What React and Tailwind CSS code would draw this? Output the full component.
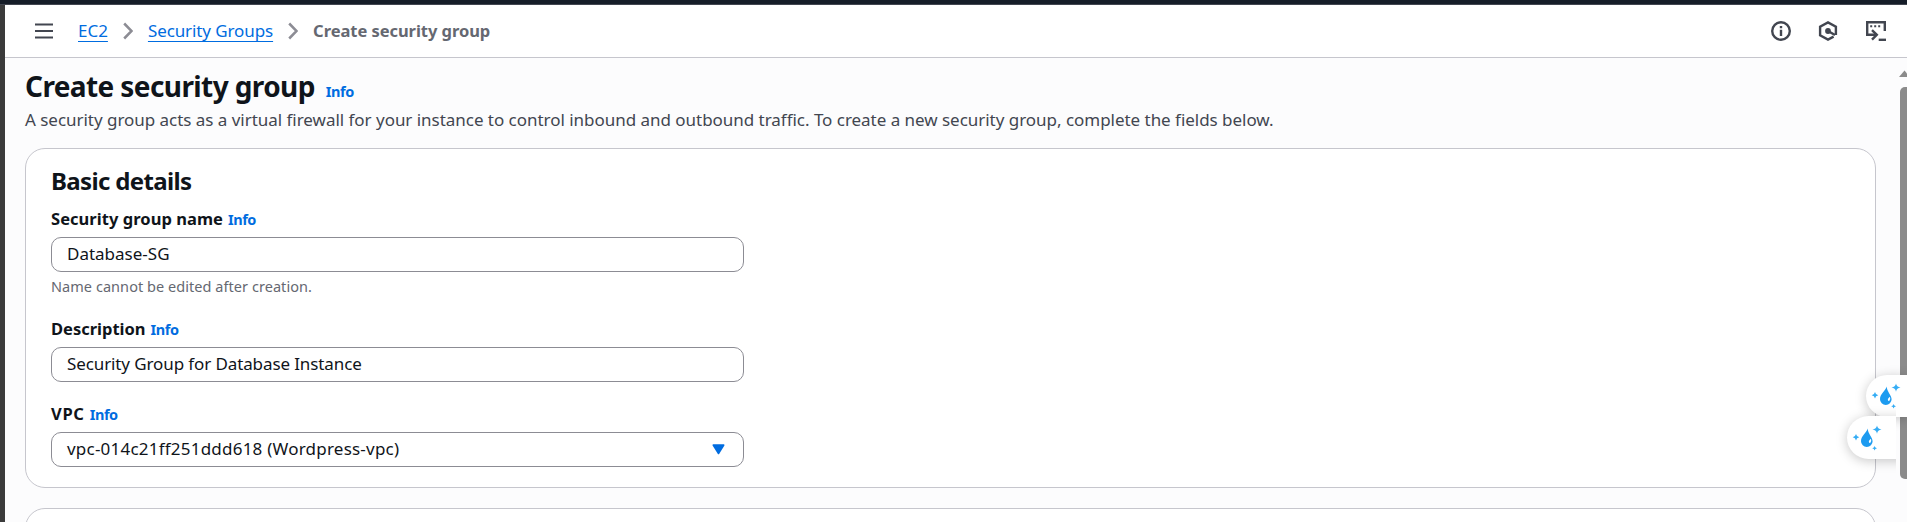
function Chevron() {
  return (
    <svg width="10" height="18" viewBox="0 0 10 18" fill="none" stroke="#8c8c94" strokeWidth="2.5" className="shrink-0">
      <path d="M1.2 1.5 L8.6 9 L1.2 16.5" />
    </svg>
  );
}

function HeaderIcons() {
  return (
    <div className="ml-auto mr-[21px] flex items-center gap-7">
      <svg width="20" height="20" viewBox="0 0 20 20" fill="none" stroke="#424650" strokeWidth="2.4" className="-mr-px">
        <circle cx="10" cy="10" r="8.8" />
        <path d="M10 8.7V15M10 5V7.3" />
      </svg>
      <svg width="20" height="20" viewBox="0 0 20 20" fill="none" stroke="#424650" strokeWidth="2.4">
        <path d="M17.9 14V5.6L10 1.4 2.1 5.6v8.8L10 18.6l5.6-3" />
        <circle cx="10" cy="10" r="2.9" fill="#424650" stroke="none" />
        <path d="M10 10l7 4" />
      </svg>
      <svg width="20" height="20" viewBox="0 0 20 20" fill="none" stroke="#424650" strokeWidth="2.4">
        <path d="M18.8 10V1.2H1.2v12.6H11" />
        <path d="M6 9.2l4.8 4.6L6 18.6" />
        <path d="M12.7 18.8H20" />
        <path d="M4.2 5.2h2M8.2 5.2h2M12.2 5.2h2" strokeWidth="2" />
      </svg>
    </div>
  );
}

function Info({ className = "" }) {
  return <a className={`text-[14.5px] font-bold tracking-[-0.42px] text-[#006ce0] ${className}`}>Info</a>;
}

function Field({ label, labelClass = "", valueClass = "", value, select, className = "" }) {
  return (
    <div className={className}>
      <div className="h-[22px] text-[16.5px] leading-[22px] text-[#0f141a]">
        <span className={`font-bold ${labelClass}`}>{label}</span>
        <Info className="ml-[5px]" />
      </div>
      <div className="mt-[7px] flex h-[35px] w-[693px] items-center justify-between rounded-[10px] border border-[#8c8c94] bg-white pl-[15px] pr-[18px] text-[17px] leading-[22px] text-[#0f141a]">
        <span className={`-mt-px ${valueClass}`}>{value}</span>
        {select && (
          <svg width="13" height="11" viewBox="0 0 13 11" fill="#006ce0" className="-mt-px">
            <path d="M1.2 0.3H11.8Q13 0.6 12.3 1.8L7.3 9.7Q6.5 10.7 5.7 9.7L0.7 1.8Q0 0.6 1.2 0.3Z" />
          </svg>
        )}
      </div>
    </div>
  );
}

function Droplet() {
  return (
    <svg width="30" height="28" viewBox="0 0 30 28" fill="#1d9bf0" className="shrink-0">
      <path d="M15.8 4.5C14.5 8.5 9 12 9 17.2a5.8 5.8 0 0 0 11.6 0C20.6 13 15.6 9.5 15.8 4.5Z" />
      <path d="M19 14.8q1 3-.9 4.4-1.6-.2-1.2-2.2.8-1.4 2.1-2.2Z" fill="white" />
      <g fill="#35adf5">
        <path d="M25 1.5Q25.6 5 29.5 5.5 25.6 6 25 9.8 24.4 6 20.5 5.5 24.4 5 25 1.5Z" />
        <path d="M4 10Q4.5 12.7 7.3 13.2 4.5 13.7 4 16.6 3.5 13.7 0.7 13.2 3.5 12.7 4 10Z" />
        <path d="M22.6 22Q22.9 24 25 24.3 22.9 24.6 22.6 26.6 22.3 24.6 20.2 24.3 22.3 24 22.6 22Z" />
      </g>
    </svg>
  );
}

export default function App() {
  return (
    <div className="relative flex h-[522px] w-full flex-col overflow-hidden bg-[#fcfcfd] font-['Noto_Sans',sans-serif]">
      <div className="h-[5px] shrink-0 border-b border-[#424650] bg-[#161d28]" />
      <div className="flex min-h-0 flex-1">
        <div className="w-[5px] shrink-0 bg-[#3b3b3b]" />
        <div className="flex min-w-0 flex-1 flex-col">
          <header className="flex h-[53px] shrink-0 items-center border-b border-[#c6c6cd] bg-white pl-[30px] text-[17px] leading-[22px]">
            <svg width="18" height="16" viewBox="0 0 18 16" stroke="#424650" strokeWidth="2.2" className="mr-[25px]">
              <path d="M0 1.5H18M0 8H18M0 14.5H18" />
            </svg>
            <nav className="flex items-center gap-[15px]">
              <a className="text-[#006ce0] underline decoration-1 underline-offset-4">EC2</a>
              <Chevron />
              <a className="tracking-[-0.1px] text-[#006ce0] underline decoration-1 underline-offset-4">Security Groups</a>
              <Chevron />
              <span className="text-[16.5px] font-bold tracking-[-0.05px] text-[#656871]">Create security group</span>
            </nav>
            <HeaderIcons />
          </header>

          <div className="flex min-h-0 flex-1">
            <main className="w-[1871px] shrink-0 pl-5 pt-[11px]">
              <div className="flex h-[34px] items-baseline">
                <h1 className="text-[28px] font-bold leading-[34px] tracking-[-0.6px] text-[#0f141a]">Create security group</h1>
                <Info className="ml-[11px] leading-5" />
              </div>
              <p className="mt-[6px] text-[17px] leading-[22px] tracking-[-0.03px] text-[#424650]">
                A security group acts as a virtual firewall for your instance to control inbound and outbound traffic. To create a new security group, complete the fields below.
              </p>
              <section className="mt-[17px] h-[340px] rounded-[20px] border border-[#c6c6cd] bg-white pl-[25px] pt-[17px]">
                <h2 className="text-[24px] font-bold leading-[30px] tracking-[-0.65px] text-[#0f141a]">Basic details</h2>
                <Field className="mt-3" label="Security group name" labelClass="tracking-[0.04px]" value="Database-SG" />
                <p className="mt-1 text-[14.5px] leading-5 tracking-[0.05px] text-[#656871]">Name cannot be edited after creation.</p>
                <Field className="mt-[22px]" label="Description" value="Security Group for Database Instance" valueClass="tracking-[-0.11px]" />
                <Field className="mt-[21px]" label="VPC" labelClass="tracking-[0.7px]" value="vpc-014c21ff251ddd618 (Wordpress-vpc)" valueClass="tracking-[0.22px]" select />
              </section>
              <section className="mt-5 h-20 rounded-[20px] border border-[#c6c6cd] bg-white" />
            </main>
            <div className="ml-auto w-[8px] shrink-0 pt-3">
              <svg width="8" height="7" viewBox="0 0 8 7" fill="#8b8b8b">
                <path d="M0 7L5.5 0.5 8 3.5V7Z" />
              </svg>
              <div className="ml-px mt-[10px] h-[392px] rounded-l-[5px] bg-[#8b8b8b]" />
            </div>
          </div>
        </div>
      </div>

      <div className="absolute right-0 top-[375px] flex h-[42px] w-[41px] items-center rounded-l-full bg-white pl-[5px] shadow-[0_2px_12px_rgba(0,0,0,0.22)]">
        <Droplet />
      </div>
      <div className="absolute right-[11px] top-[396px] h-[90px] w-[70px] overflow-hidden pl-[21px] pt-5">
        <div className="flex h-[43px] w-20 items-center rounded-l-full bg-white pl-[5px] shadow-[0_2px_12px_rgba(0,0,0,0.22)]">
          <Droplet />
        </div>
      </div>
    </div>
  );
}
